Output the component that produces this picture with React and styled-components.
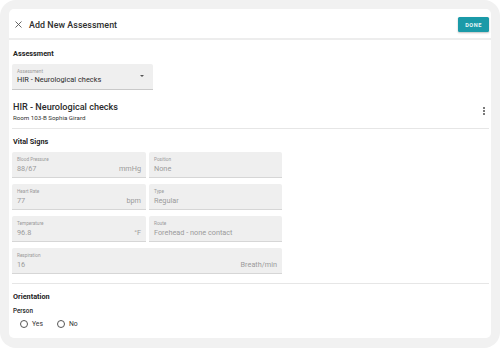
import React from 'react';
import styled, { createGlobalStyle } from 'styled-components';

const GlobalStyle = createGlobalStyle`
    html, body {
        margin: 0;
        padding: 0;
        background: #fff;
    }
    body {
        font-family: Roboto, "Liberation Sans", Arial, sans-serif;
        color: #222;
    }
`;

const Frame = styled.div`
    width: 500px;
    height: 348px;
    box-sizing: border-box;
    padding: 9px 9px 10px 9px;
    background: #f1f1f1;
    border-radius: 16px;
`;

const Panel = styled.div`
    height: 100%;
    background: #fff;
    border-radius: 5px;
    overflow: hidden;
    display: flex;
    flex-direction: column;
`;

const Header = styled.div`
    height: 31px;
    box-sizing: border-box;
    padding: 2px 2px 0 4px;
    flex-shrink: 0;
    display: flex;
    align-items: center;
    border-bottom: 2px solid #ededed;
`;

const CloseButton = styled.span`
    width: 10px;
    height: 10px;
    display: flex;
    align-items: center;
    justify-content: center;
    margin-right: 6px;
`;

const Title = styled.h1`
    flex: 1;
    margin: 0;
    font-size: 8.9px;
    font-weight: 500;
    color: #2e2e2e;
    letter-spacing: 0.05px;
`;

const DoneButton = styled.button`
    border: none;
    background: #1a9aa8;
    color: #e8f7f8;
    font-family: inherit;
    font-size: 5.6px;
    font-weight: 700;
    letter-spacing: 0.5px;
    width: 31px;
    height: 15px;
    padding: 0;
    border-radius: 1.5px;
    box-shadow: 0 1px 2px rgba(0, 0, 0, 0.25);
`;

const Body = styled.div`
    padding: 9px 2px 0 3px;
`;

const SectionTitle = styled.div`
    font-size: 7.3px;
    font-weight: 700;
    color: #222;
    line-height: 10px;
    padding-left: 1px;
    margin-top: ${p => p.$top || 0}px;
`;

const SelectBox = styled.div`
    width: 141px;
    height: 26px;
    margin-top: 5px;
    box-sizing: border-box;
    background: #efefef;
    border-bottom: 1px solid #c9c9c9;
    border-radius: 2px 2px 0 0;
    padding: 5px 5px 0 5px;
    position: relative;
`;

const Caret = styled.span`
    position: absolute;
    right: 9px;
    top: 11px;
    width: 0;
    height: 0;
    border-left: 2.5px solid transparent;
    border-right: 2.5px solid transparent;
    border-top: 2.5px solid #555;
`;

const TinyLabel = styled.div`
    font-size: 4.7px;
    line-height: 6px;
    color: #9a9a9a;
`;

const SelectValue = styled.div`
    font-size: 7.4px;
    line-height: 10px;
    color: #2a2a2a;
`;

const RecordHead = styled.div`
    display: flex;
    align-items: center;
    margin-top: 11px;
    padding-left: 1px;
    padding-bottom: 6px;
    border-bottom: 1px solid #e6e6e6;
`;

const RecordText = styled.div`
    flex: 1;
`;

const RecordTitle = styled.div`
    font-size: 9.1px;
    font-weight: 500;
    line-height: 12px;
    color: #2a2a2a;
`;

const RecordSub = styled.div`
    font-size: 6.2px;
    line-height: 8px;
    margin-top: 1px;
    color: #333;
`;

const Kebab = styled.span`
    display: flex;
    flex-direction: column;
    gap: 1px;
    margin-right: 4px;
    margin-top: -2px;

    i {
        width: 2px;
        height: 2px;
        background: #7a7a7a;
    }
`;

const FieldGrid = styled.div`
    display: grid;
    grid-template-columns: 134px 133px;
    column-gap: 3px;
    row-gap: 6px;
    margin-top: 5px;
    width: 270px;
`;

const Field = styled.div`
    grid-column: ${p => (p.$wide ? '1 / span 2' : 'auto')};
    height: 26px;
    box-sizing: border-box;
    background: #efefef;
    border-bottom: 1px solid #d6d6d6;
    border-radius: 2px 2px 0 0;
    padding: 5px 5px 0 5px;
`;

const FieldRow = styled.div`
    display: flex;
    justify-content: space-between;
    font-size: 7.3px;
    line-height: 11px;
    color: #9b9b9b;
`;

const Divider = styled.div`
    height: 1px;
    background: #e6e6e6;
    margin-top: 9px;
`;

const SmallLabel = styled.div`
    font-size: 6.3px;
    font-weight: 500;
    line-height: 8px;
    color: #222;
    padding-left: 1px;
    margin-top: ${p => p.$top || 0}px;
`;

const RadioGroup = styled.div`
    display: flex;
    align-items: center;
    gap: 14px;
    padding-left: 8px;
    margin-top: 5px;
`;

const RadioOption = styled.label`
    display: flex;
    align-items: center;
    gap: 4px;
    font-size: 6.8px;
    color: #333;
`;

const RadioCircle = styled.span`
    width: 6px;
    height: 6px;
    border: 1.1px solid #555;
    border-radius: 50%;
`;

const fields = [
    { label: 'Blood Pressure', value: '88/67', unit: 'mmHg' },
    { label: 'Position', value: 'None' },
    { label: 'Heart Rate', value: '77', unit: 'bpm' },
    { label: 'Type', value: 'Regular' },
    { label: 'Temperature', value: '96.8', unit: '°F' },
    { label: 'Route', value: 'Forehead - none contact' },
    { label: 'Respiration', value: '16', unit: 'Breath/min', wide: true },
];

const App = () => {
    return (
        <>
            <GlobalStyle />
            <Frame>
                <Panel>
                    <Header>
                        <CloseButton>
                            <svg width="7" height="7" viewBox="0 0 7 7">
                                <path d="M0.5 0.5 L6.5 6.5 M6.5 0.5 L0.5 6.5" stroke="#555" strokeWidth="0.9" />
                            </svg>
                        </CloseButton>
                        <Title>Add New Assessment</Title>
                        <DoneButton>DONE</DoneButton>
                    </Header>
                    <Body>
                        <SectionTitle>Assessment</SectionTitle>
                        <SelectBox>
                            <TinyLabel>Assessment</TinyLabel>
                            <SelectValue>HIR - Neurological checks</SelectValue>
                            <Caret />
                        </SelectBox>

                        <RecordHead>
                            <RecordText>
                                <RecordTitle>HIR - Neurological checks</RecordTitle>
                                <RecordSub>Room 103-B Sophia Girard</RecordSub>
                            </RecordText>
                            <Kebab><i /><i /><i /></Kebab>
                        </RecordHead>

                        <SectionTitle $top={8}>Vital Signs</SectionTitle>
                        <FieldGrid>
                            {fields.map(f => (
                                <Field key={f.label} $wide={f.wide}>
                                    <TinyLabel>{f.label}</TinyLabel>
                                    <FieldRow>
                                        <span>{f.value}</span>
                                        {f.unit && <span>{f.unit}</span>}
                                    </FieldRow>
                                </Field>
                            ))}
                        </FieldGrid>

                        <Divider />
                        <SectionTitle $top={8}>Orientation</SectionTitle>
                        <SmallLabel $top={5}>Person</SmallLabel>
                        <RadioGroup>
                            <RadioOption><RadioCircle />Yes</RadioOption>
                            <RadioOption><RadioCircle />No</RadioOption>
                        </RadioGroup>
                        <SmallLabel $top={9}>Time</SmallLabel>
                    </Body>
                </Panel>
            </Frame>
        </>
    );
};

export default App;
